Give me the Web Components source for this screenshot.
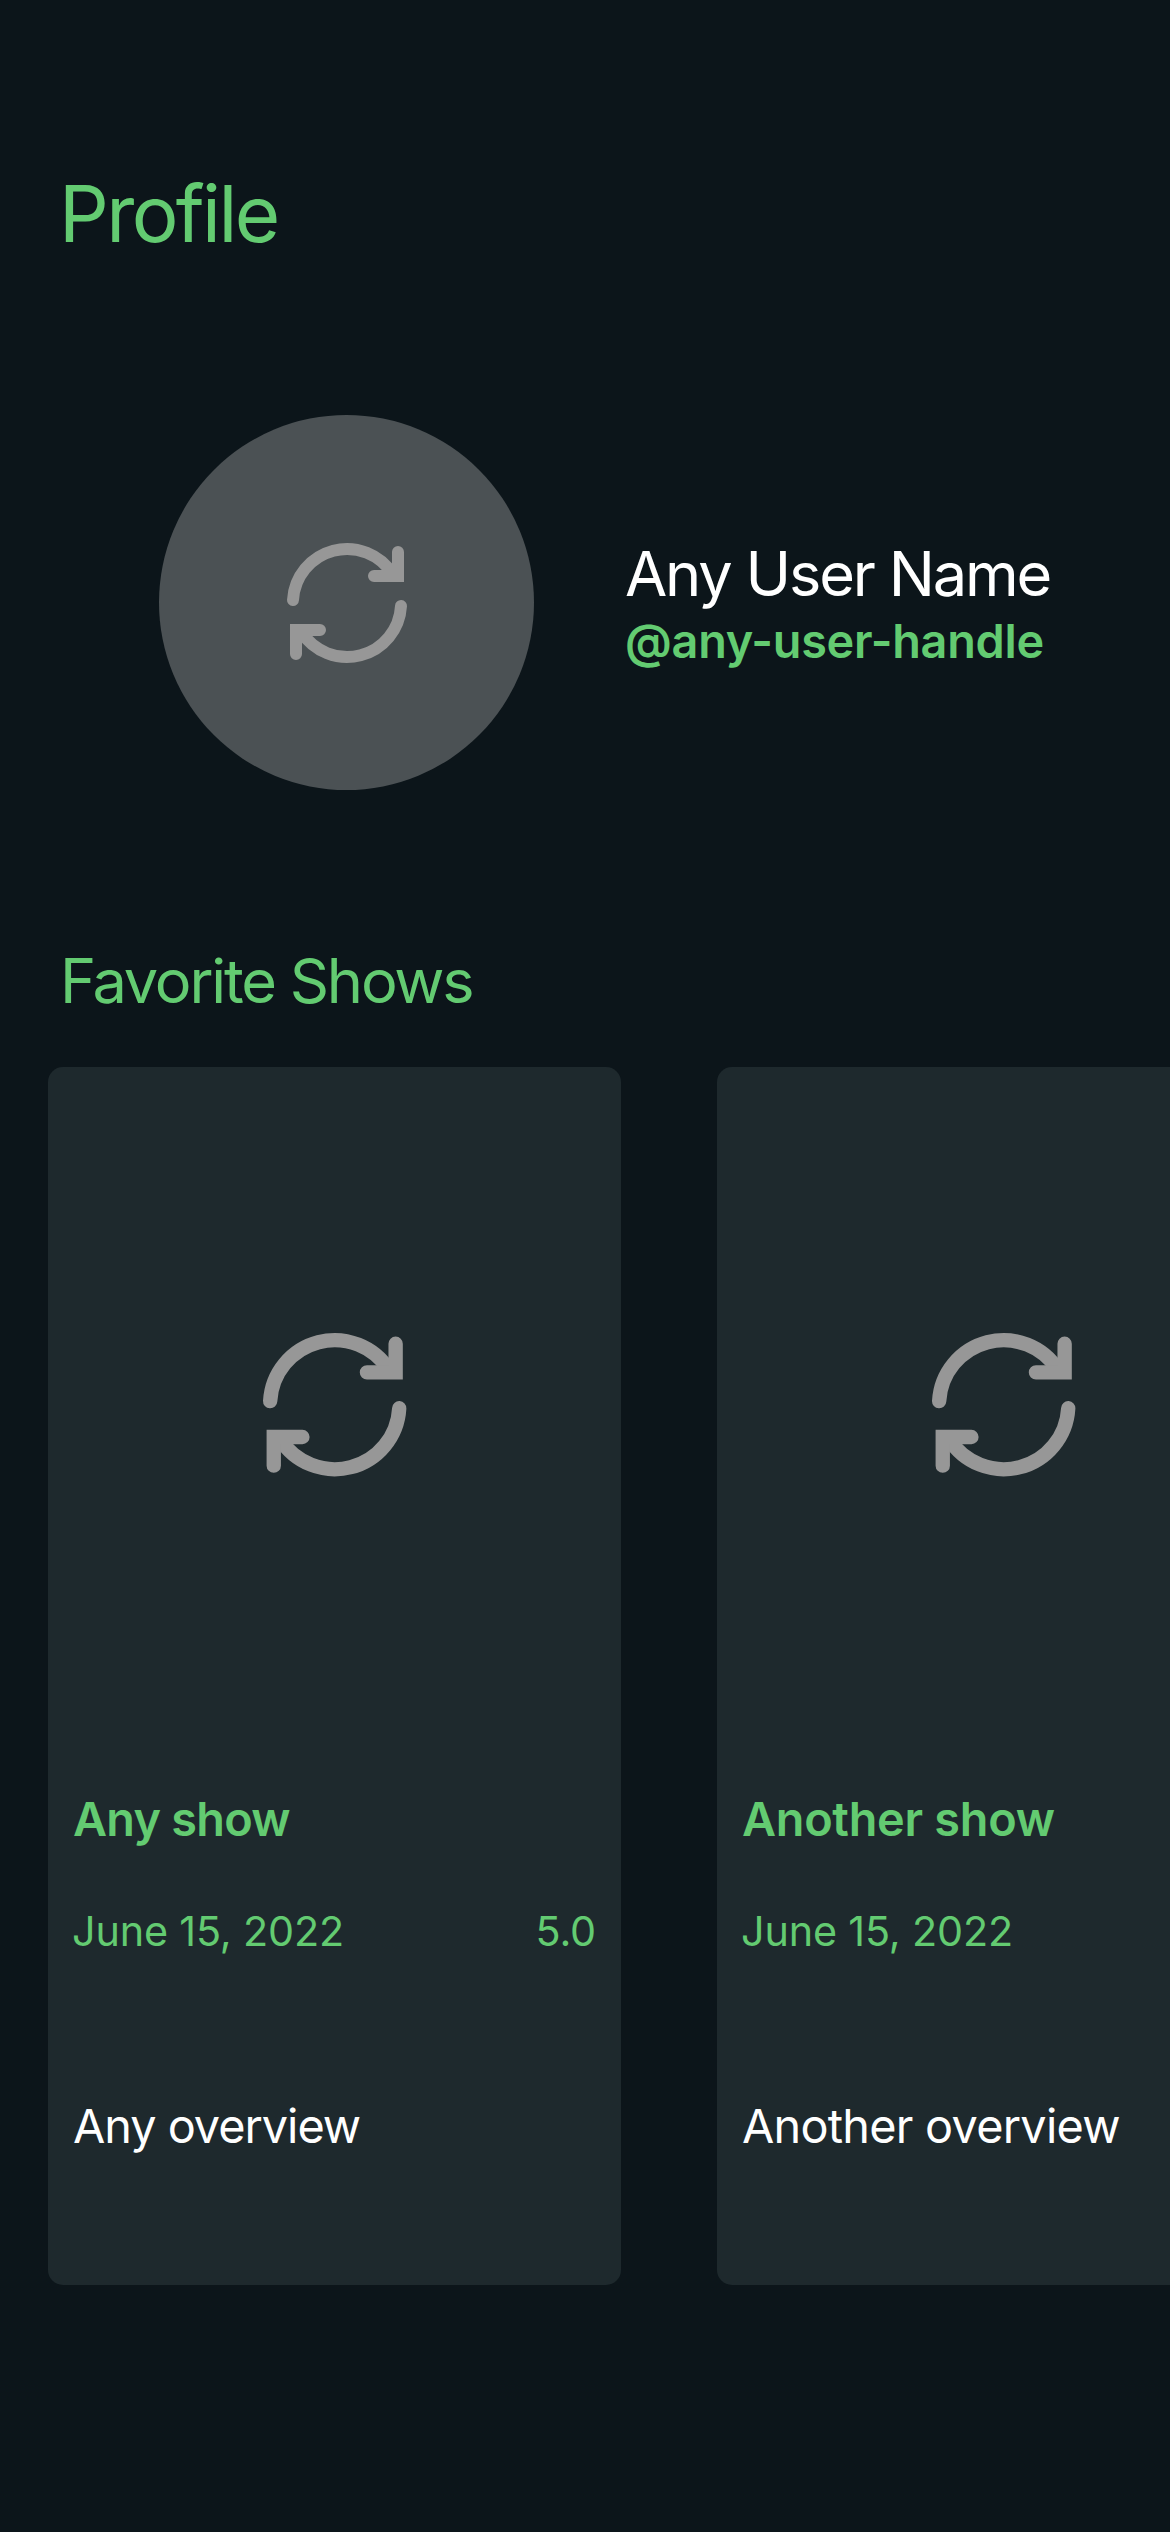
<!DOCTYPE html>
<html lang="en">
<head>
<meta charset="utf-8">
<title>Profile</title>
<style>
  html { background: #0c151a; }
  body { margin: 0; width: 1170px; height: 2532px; overflow: hidden; font-family: Inter, "Liberation Sans", sans-serif; }
</style>
</head>
<body>
<profile-screen>
  <user-header slot="header">
    <span slot="name">Any User Name</span>
    <span slot="handle">@any-user-handle</span>
  </user-header>
  <show-card style="--title-spacing:-0.72px;--overview-spacing:-1.01px">
    <span slot="title">Any show</span>
    <span slot="date">June 15, 2022</span>
    <span slot="rating">5.0</span>
    <span slot="overview">Any overview</span>
  </show-card>
  <show-card style="--title-spacing:-0.27px;--overview-spacing:-0.74px">
    <span slot="title">Another show</span>
    <span slot="date">June 15, 2022</span>
    <span slot="overview">Another overview</span>
  </show-card>
</profile-screen>
<script>
function define(name, html) {
  const template = document.createElement('template');
  template.innerHTML = html;
  customElements.define(name, class extends HTMLElement {
    constructor() {
      super();
      this.attachShadow({ mode: 'open' }).appendChild(template.content.cloneNode(true));
    }
  });
}

define('sync-icon', `
  <style>
    :host { display: block; flex: none; width: 120px; height: 120px; }
    svg { display: block; width: 100%; height: 100%; overflow: visible; }
  </style>
  <svg viewBox="0 0 20 20" fill="none" stroke="#979797" stroke-width="2" stroke-linecap="round" stroke-linejoin="miter" aria-hidden="true">
    <path d="M1 9.5A9 9 0 0 1 17.6 5.2"/>
    <path d="M18.5 1.5V5.5H14.5"/>
    <path d="M19 10.5A9 9 0 0 1 2.4 14.8"/>
    <path d="M1.5 18.5V14.5H5.5"/>
  </svg>`);

define('user-header', `
  <style>
    :host { display: flex; align-items: center; gap: 91px; height: 375px; padding-left: 159px; white-space: nowrap; }
    .avatar { display: flex; align-items: center; justify-content: center; flex: none; width: 375px; height: 375px; border-radius: 50%; background: #4b5154; }
    sync-icon { margin: 1px 0 0 1px; }
    .text { padding-top: 2px; }
    .name { font-size: 61.3px; line-height: 75px; letter-spacing: -2.18px; color: #fff; }
    .handle { font-size: 46.8px; line-height: 58px; font-weight: 600; letter-spacing: -0.24px; color: #63cb71; }
  </style>
  <div class="avatar"><sync-icon></sync-icon></div>
  <div class="text">
    <div class="name"><slot name="name"></slot></div>
    <div class="handle"><slot name="handle"></slot></div>
  </div>`);

define('show-card', `
  <style>
    :host { display: flex; flex-direction: column; flex: none; box-sizing: border-box; width: 573px; height: 1218px; border-radius: 15px; background: #1e292d; color: #63cb71; white-space: nowrap; }
    .poster { display: flex; align-items: center; justify-content: center; height: 675px; }
    sync-icon { width: 143.4px; height: 143.4px; margin-left: 1px; }
    .body { padding: 48px 25px 0; }
    .title { font-size: 46.8px; line-height: 58px; font-weight: 600; letter-spacing: var(--title-spacing); }
    .meta { display: flex; justify-content: space-between; margin: 58px 0 141px -1px; font-size: 41.3px; line-height: 50px; letter-spacing: -0.15px; }
    .overview { font-size: 46.8px; line-height: 58px; letter-spacing: var(--overview-spacing); color: #fff; }
  </style>
  <div class="poster"><sync-icon></sync-icon></div>
  <div class="body">
    <div class="title"><slot name="title"></slot></div>
    <div class="meta"><slot name="date"></slot><slot name="rating"></slot></div>
    <div class="overview"><slot name="overview"></slot></div>
  </div>`);

define('profile-screen', `
  <style>
    :host { display: block; box-sizing: border-box; width: 1170px; height: 2532px; padding-top: 167px; overflow: hidden; background: #0c151a; color: #63cb71; }
    h1, h2 { margin: 0 0 0 60px; font-weight: 400; white-space: nowrap; }
    h1 { font-size: 78px; line-height: 94px; letter-spacing: -2.6px; margin: 0 0 154px 59px; }
    h2 { font-size: 61.3px; line-height: 74px; letter-spacing: -2.2px; margin-top: 154px; }
    .shows { display: flex; gap: 96px; margin-top: 49px; padding-left: 48px; }
  </style>
  <h1>Profile</h1>
  <slot name="header"></slot>
  <h2>Favorite Shows</h2>
  <div class="shows"><slot></slot></div>`);
</script>
</body>
</html>
